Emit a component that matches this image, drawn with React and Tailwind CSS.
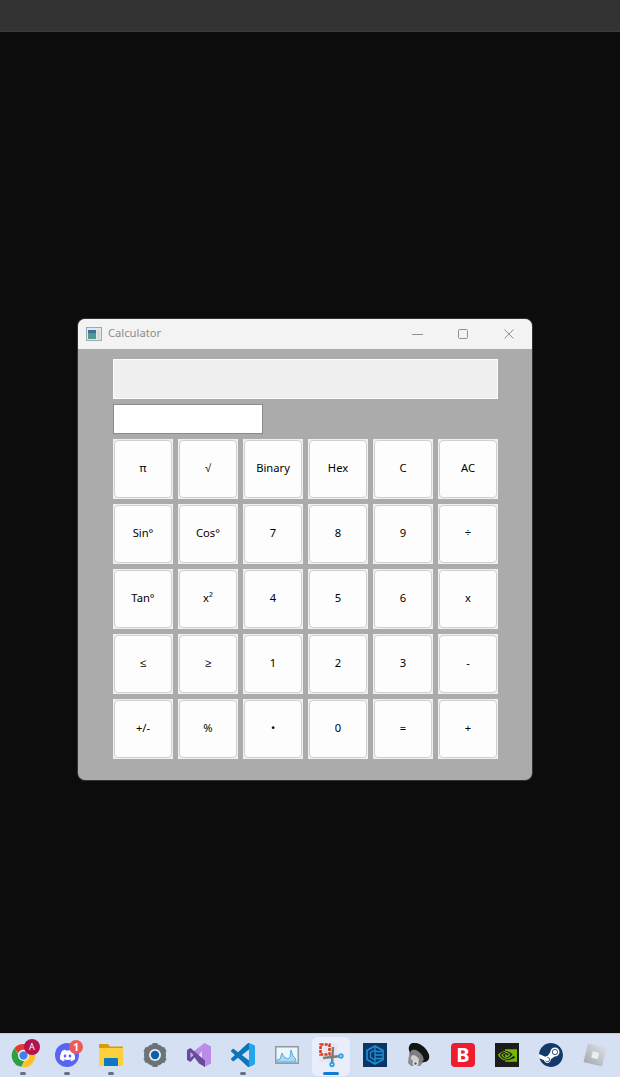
import React from "react";
import { SiDiscord, SiNvidia, SiSteam } from "react-icons/si";

const keys = [
  "π", "√", "Binary", "Hex", "C", "AC",
  "Sin°", "Cos°", "7", "8", "9", "÷",
  "Tan°", "x²", "4", "5", "6", "x",
  "≤", "≥", "1", "2", "3", "-",
  "+/-", "%", "•", "0", "=", "+",
];

function Chrome() {
  return (
    <svg width="25" height="25" viewBox="0 0 26 26">
      <path d="M13 1a12 12 0 0 1 10.4 6H13a6 6 0 0 0-5.6 3.8L3.6 5.2A12 12 0 0 1 13 1z" fill="#e33b2e" />
      <path d="M3.6 5.2l5.3 9.2a5 5 0 0 0 5.4 3.4l-3.6 7A12 12 0 0 1 3.6 5.2z" fill="#2f9e44" />
      <path d="M23.4 7a12 12 0 0 1-12.7 18l5.2-9a6 6 0 0 0 .6-9z" fill="#fbc02d" />
      <circle cx="13" cy="13" r="5" fill="#3f83ea" stroke="#fff" strokeWidth="1.2" />
    </svg>
  );
}

function Discord() {
  return (
    <div className="w-[24px] h-[24px] rounded-full bg-[#5865f2] flex items-center justify-center">
      <SiDiscord size={15} color="#fff" />
    </div>
  );
}

function Folder() {
  return (
    <svg width="24" height="24" viewBox="0 0 24 24">
      <path d="M0 2A1 1 0 0 1 1 1h8l2 2.500h12a1 1 0 0 1 1 1V8H0z" fill="#d99a0c" />
      <path d="M0 5h24v17a1 1 0 0 1-1 1H1a1 1 0 0 1-1-1z" fill="#fdd13e" />
      <path d="M5 16a1 1 0 0 1 1-1h12a1 1 0 0 1 1 1v7H5z" fill="#0f78c4" />
    </svg>
  );
}

function Gear() {
  return (
    <svg width="24" height="24" viewBox="0 0 24 24">
      <circle cx="12" cy="12" r="8" fill="none" stroke="#6b7378" strokeWidth="6" />
      <path d="M12 0v5M12 19v5M1.600 6l4.300 2.500M18.100 15.500l4.300 2.500M1.600 18l4.300-2.500M18.100 8.500L22.400 6" stroke="#6b7378" strokeWidth="5" />
      <circle cx="12" cy="12" r="6" fill="#e7ecf3" />
      <circle cx="12" cy="12" r="4.200" fill="#0f5fa8" />
    </svg>
  );
}

function VisualStudio() {
  return (
    <svg width="24" height="24" viewBox="0 0 24 24">
      <path d="M17.500 0L24 3.500v17L17.500 24 15 21V8l-5 6.500L4.500 10z" fill="#b98ce8" />
      <path d="M0 7l3.500-2L18 17.500V24l-6-3.500-4.500-6L3.500 19 0 17z" fill="#6a4a9c" />
      <path d="M3.500 9v6l3-3z" fill="#c9b4ea" />
    </svg>
  );
}

function VSCode() {
  const d = "M23.15 2.587L18.21.21a1.494 1.494 0 0 0-1.705.29l-9.46 8.63-4.12-3.128a.999.999 0 0 0-1.276.057L.327 7.261A1 1 0 0 0 .326 8.74L3.899 12 .326 15.26a1 1 0 0 0 .001 1.479L1.65 17.94a.999.999 0 0 0 1.276.057l4.12-3.128 9.46 8.63a1.492 1.492 0 0 0 1.704.29l4.942-2.377A1.5 1.5 0 0 0 24 20.06V3.939a1.5 1.500 0 0 0-.85-1.352zm-5.146 14.861L10.826 12l7.178-5.448v10.896z";
  return (
    <svg width="24" height="24" viewBox="0 0 24 24">
      <defs>
        <clipPath id="vsRight"><rect x="18" y="0" width="6" height="24" /></clipPath>
      </defs>
      <path d={d} fill="#0a75bb" />
      <path d={d} fill="#25a5ee" clipPath="url(#vsRight)" />
    </svg>
  );
}

function ResourceMonitor() {
  return (
    <svg width="24" height="18" viewBox="0 0 24 18">
      <rect x="0.750" y="0.750" width="22.500" height="16.500" fill="#eef5fb" stroke="#8f9aa6" strokeWidth="1.500" />
      <path d="M2 14l3-1 2-6 2 4 2 1 2 1 2-2 1-7 2 6 2 2 1 3v1H2z" fill="#a9d8f4" stroke="#3b9fe0" strokeWidth="0.800" />
    </svg>
  );
}

function Snip() {
  return (
    <svg width="28" height="28" viewBox="0 0 28 28">
      <rect x="2" y="2" width="19" height="19" rx="1.500" fill="#e4e8f0" />
      <rect x="3.500" y="3.500" width="9" height="10" fill="none" stroke="#d9391f" strokeWidth="2.500" strokeDasharray="3 1.200" />
      <path d="M6 17l18-2M16 6l-1 17" stroke="#7d7d7d" strokeWidth="2.500" />
      <circle cx="24" cy="15" r="2.700" fill="#2fa3e6" />
      <circle cx="15" cy="23.500" r="2.700" fill="#2fa3e6" />
      <path d="M22.800 15h2.400M14 23.500h2" stroke="#fff" strokeWidth="0.800" />
    </svg>
  );
}

function HexShield() {
  return (
    <svg width="24" height="24" viewBox="0 0 24 24">
      <rect width="24" height="24" fill="#0a3565" />
      <path d="M12 3l8 4.500v9L12 21l-8-4.500v-9z" fill="none" stroke="#1d8fd4" strokeWidth="1.700" />
      <path d="M12 3v18M12 8.500h7M12 12h7M12 15.500h7" stroke="#1d8fd4" strokeWidth="1.300" />
      <path d="M12 7L7.500 9.500v5L12 17" fill="none" stroke="#1d8fd4" strokeWidth="1.300" />
    </svg>
  );
}

function Speaker() {
  return (
    <svg width="22" height="24" viewBox="0 0 22 24">
      <path d="M3 3l15 13-6 7H3l-3-3 1-8z" fill="#8c8c8c" />
      <ellipse cx="11" cy="9.500" rx="12" ry="7.500" transform="rotate(42 11 9.500)" fill="#141414" />
      <ellipse cx="9" cy="13" rx="8" ry="4.500" transform="rotate(42 9 13)" fill="#7e7e7e" />
      <ellipse cx="7" cy="16" rx="4.500" ry="3" transform="rotate(42 7 16)" fill="#cfcfcf" />
      <circle cx="7.500" cy="20.500" r="2.800" fill="#e4e4e4" />
      <circle cx="7.500" cy="20.500" r="1.200" fill="#555555" />
    </svg>
  );
}

function Nvidia() {
  return (
    <div className="w-[24px] h-[24px] bg-[#1c1c1c] flex items-center justify-center">
      <SiNvidia size={19} color="#76b900" />
    </div>
  );
}

function Steam() {
  return (
    <div className="w-[24px] h-[24px] rounded-full bg-white flex items-center justify-center">
      <SiSteam size={24} color="#123a6b" />
    </div>
  );
}

function Roblox() {
  return (
    <svg width="24" height="24" viewBox="0 0 24 24">
      <defs>
        <linearGradient id="rbx" x1="1" y1="0" x2="0" y2="1">
          <stop offset="0" stopColor="#e2e5eb" />
          <stop offset="1" stopColor="#9ea3ab" />
        </linearGradient>
      </defs>
      <path d="M5 .500l18.500 4.500L19 23.500 .500 19z" fill="url(#rbx)" />
      <rect x="9" y="9" width="6.500" height="6.500" fill="#e9ecf3" transform="rotate(14 12 12)" />
    </svg>
  );
}

function TaskIcon({ dot, active, children, badge }) {
  return (
    <div className="relative w-[44px] h-[44px] flex items-center justify-center">
      {active && <div className="absolute left-[3px] top-[4px] w-[38px] h-[39px] rounded-md bg-[#e9eefa]" />}
      <div className="relative flex">{children}</div>
      {badge}
      {dot && <div className="absolute bottom-[2px] left-[19px] w-[6px] h-[3px] rounded-full bg-[#6a6f78]" />}
      {active && <div className="absolute bottom-[2px] left-[14px] w-[16px] h-[3px] rounded-full bg-[#0f7cd6]" />}
    </div>
  );
}

export default function App() {
  return (
    <div className="w-[620px] h-[1077px] flex flex-col bg-[#0c0c0c] overflow-hidden font-['Noto_Sans',sans-serif]">
      <div className="h-[32px] bg-[#333333] border-b border-[#3d3d3d]" />

      <div className="flex-1">
        <div className="mt-[287px] ml-[78px] w-[454px] h-[461px] rounded-[7px] overflow-hidden bg-[#ababab] flex flex-col shadow-[0_0_0_1px_#333333]">
          <div className="h-[30px] bg-[#f3f3f3] flex items-center pl-[8px] pb-px">
            <svg width="16" height="14" viewBox="0 0 16 14">
              <rect x="0.500" y="0.500" width="15" height="13" fill="#e4e8ea" stroke="#a0a8ad" />
              <rect x="2" y="3" width="8" height="9" fill="#4f9a93" />
              <rect x="2" y="3" width="8" height="3" fill="#3f6f9f" />
              <rect x="11" y="3" width="3" height="9" fill="#cfe0d8" />
            </svg>
            <span className="ml-[6px] text-[11.2px] text-[#8c8c8c]">Calculator</span>
            <div className="ml-auto flex items-center">
              <svg width="11" height="10" viewBox="0 0 11 10" className="mr-[35px]">
                <path d="M0 5.500h11" stroke="#909090" />
              </svg>
              <svg width="10" height="10" viewBox="0 0 10 10" className="mr-[36px]">
                <rect x="0.500" y="0.500" width="9" height="9" rx="1" fill="none" stroke="#909090" />
              </svg>
              <svg width="10" height="10" viewBox="0 0 10 10" className="mr-[18px]">
                <path d="M.500 .500l9 9M9.500 .500l-9 9" stroke="#909090" />
              </svg>
            </div>
          </div>

          <div className="pl-[35px] pt-[10px] flex flex-col">
            <div className="w-[385px] h-[40px] bg-[#f0f0f0] border border-[#fdfdfd]" />
            <div className="mt-[5px] w-[150px] h-[30px] bg-white border border-[#868a91]" />
            <div className="mt-[5px] grid grid-cols-[repeat(6,60px)] gap-[5px]">
              {keys.map((k) => (
                <div key={k} className="h-[60px] bg-[#f0f0f0] p-[1px]">
                  <div className="w-full h-full pb-px bg-[#fdfdfd] border border-[#d0d0d0] rounded-[4px] flex items-center justify-center text-[11.2px] text-black">
                    {k}
                  </div>
                </div>
              ))}
            </div>
          </div>
        </div>
      </div>

      <div className="h-[44px] bg-[#d6e0f3] shadow-[inset_0_1px_0_#c4cbd8] flex pl-px">
        <TaskIcon dot badge={<div className="absolute top-[6px] left-[23px] w-[16px] h-[16px] rounded-full bg-[#b5134f] text-white text-[9px] flex items-center justify-center">A</div>}><Chrome /></TaskIcon>
        <TaskIcon dot badge={<div className="absolute top-[7px] left-[24px] w-[14px] h-[14px] rounded-full bg-[#ee5a5a] text-white text-[10px] font-bold flex items-center justify-center">1</div>}><Discord /></TaskIcon>
        <TaskIcon dot><Folder /></TaskIcon>
        <TaskIcon><Gear /></TaskIcon>
        <TaskIcon><VisualStudio /></TaskIcon>
        <TaskIcon dot><VSCode /></TaskIcon>
        <TaskIcon><ResourceMonitor /></TaskIcon>
        <TaskIcon active><Snip /></TaskIcon>
        <TaskIcon><HexShield /></TaskIcon>
        <TaskIcon><Speaker /></TaskIcon>
        <TaskIcon>
          <div className="w-[24px] h-[24px] rounded-[4px] bg-[#ed1c2e] text-white text-[20px] font-bold flex items-center justify-center">B</div>
        </TaskIcon>
        <TaskIcon><Nvidia /></TaskIcon>
        <TaskIcon><Steam /></TaskIcon>
        <TaskIcon><Roblox /></TaskIcon>
      </div>
    </div>
  );
}
